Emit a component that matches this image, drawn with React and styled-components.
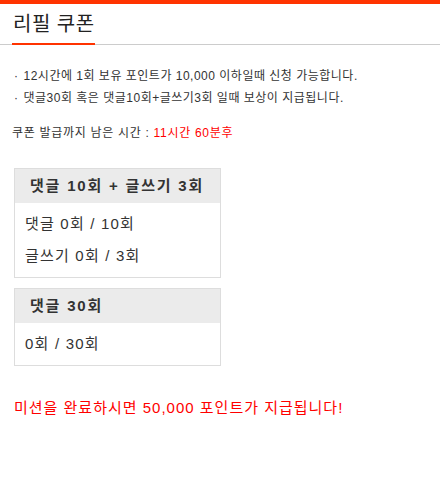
import React from "react";
import styled, { createGlobalStyle } from "styled-components";

const Global = createGlobalStyle`
  html, body { margin: 0; padding: 0; background: #fff; }
  body { font-family: "Liberation Sans", "Noto Sans CJK KR", sans-serif; color: #333; }
`;

const Page = styled.div`
  border-top: 4px solid #ff3300;
  width: 440px;
`;

const Header = styled.div`
  border-bottom: 1px solid #ccc;
  padding: 0 12px;
  height: 40px;
  display: flex;
  align-items: flex-end;
`;

const Title = styled.h1`
  margin: 0 0 -1px 0;
  font-size: 20px;
  font-weight: 400;
  color: #222;
  line-height: 24px;
  padding-bottom: 7px;
  border-bottom: 2px solid #ff3300;
  width: 83px;
  box-sizing: border-box;
  padding-left: 1px;
  letter-spacing: 0.5px;
`;

const Body = styled.div`
  padding: 20px 12px 0 12px;
`;

const Notes = styled.ul`
  list-style: none;
  margin: 0;
  padding: 0 0 0 2px;
`;

const Note = styled.li`
  font-size: 12px;
  line-height: 22px;
  color: #333;
  letter-spacing: 0.5px;
  &::before { content: "·"; margin-right: 5px; }
`;

const Remain = styled.p`
  margin: 16px 0 0 0;
  font-size: 12px;
  line-height: 16px;
  color: #333;
  letter-spacing: 0.7px;
`;

const Red = styled.span`
  color: #ff0000;
`;

const Missions = styled.div`
  margin: 27px 0 0 2px;
  display: flex;
  flex-direction: column;
  gap: 10px;
`;

const Box = styled.div`
  width: 207px;
  box-sizing: border-box;
  border: 1px solid #ddd;
`;

const BoxHead = styled.div`
  background: #ebebeb;
  height: 34px;
  line-height: 34px;
  padding-left: 15px;
  font-size: 15px;
  font-weight: bold;
  color: #333;
  letter-spacing: 1.8px;
`;

const BoxBody = styled.div`
  padding: 5px 10px 5px 10px;
`;

const Row = styled.div`
  font-size: 15px;
  line-height: 32px;
  color: #333;
  letter-spacing: 1.2px;
`;

const Footer = styled.p`
  margin: 32px 0 0 2px;
  font-size: 15px;
  color: #ff0000;
  line-height: 20px;
  letter-spacing: 1px;
`;

const missions = [
  { title: "댓글 10회 + 글쓰기 3회", rows: ["댓글 0회 / 10회", "글쓰기 0회 / 3회"] },
  { title: "댓글 30회", rows: ["0회 / 30회"] },
];

export default function App() {
  return (
    <Page>
      <Global />
      <Header>
        <Title>리필 쿠폰</Title>
      </Header>
      <Body>
        <Notes>
          <Note>12시간에 1회 보유 포인트가 10,000 이하일때 신청 가능합니다.</Note>
          <Note>댓글30회 혹은 댓글10회+글쓰기3회 일때 보상이 지급됩니다.</Note>
        </Notes>
        <Remain>
          쿠폰 발급까지 남은 시간 : <Red>11시간 60분후</Red>
        </Remain>
        <Missions>
          {missions.map((m) => (
            <Box key={m.title}>
              <BoxHead>{m.title}</BoxHead>
              <BoxBody>
                {m.rows.map((r) => (
                  <Row key={r}>{r}</Row>
                ))}
              </BoxBody>
            </Box>
          ))}
        </Missions>
        <Footer>미션을 완료하시면 50,000 포인트가 지급됩니다!</Footer>
      </Body>
    </Page>
  );
}
